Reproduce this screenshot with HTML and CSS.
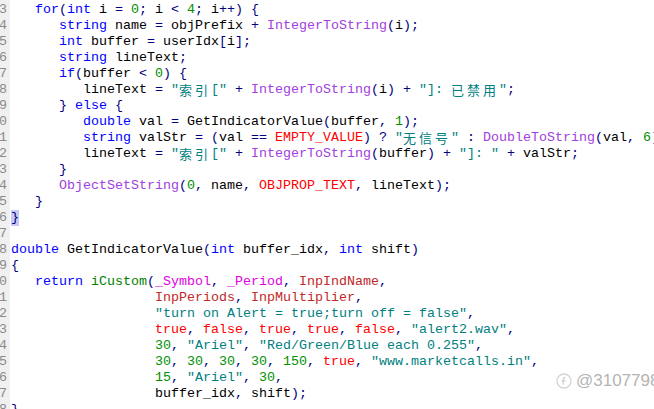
FILE: index.html
```html
<!DOCTYPE html>
<html lang="zh">
<head>
<meta charset="utf-8">
<title>MQL code</title>
<link rel="stylesheet" href="styles.css">
</head>
<body>
<div class="editor">
  <div class="row"><span class="gut">3</span><span class="code">   <span class="k">for</span><span class="o">(</span><span class="k">int</span> i <span class="o">=</span> <span class="n">0</span><span class="o">;</span> i <span class="o">&lt;</span> <span class="n">4</span><span class="o">;</span> i<span class="o">++)</span> <span class="o">{</span></span></div>
  <div class="row"><span class="gut">4</span><span class="code">      <span class="k">string</span> name <span class="o">=</span> objPrefix <span class="o">+</span> <span class="f">IntegerToString</span><span class="o">(</span>i<span class="o">);</span></span></div>
  <div class="row"><span class="gut">5</span><span class="code">      <span class="k">int</span> buffer <span class="o">=</span> userIdx<span class="o">[</span>i<span class="o">];</span></span></div>
  <div class="row"><span class="gut">6</span><span class="code">      <span class="k">string</span> lineText<span class="o">;</span></span></div>
  <div class="row"><span class="gut">7</span><span class="code">      <span class="k">if</span><span class="o">(</span>buffer <span class="o">&lt;</span> <span class="n">0</span><span class="o">)</span> <span class="o">{</span></span></div>
  <div class="row"><span class="gut">8</span><span class="code">         lineText <span class="o">=</span> <span class="s">"<span class="cj">索</span><span class="cj">引</span>["</span> <span class="o">+</span> <span class="f">IntegerToString</span><span class="o">(</span>i<span class="o">)</span> <span class="o">+</span> <span class="s">"]: <span class="cj">已</span><span class="cj">禁</span><span class="cj">用</span>"</span><span class="o">;</span></span></div>
  <div class="row"><span class="gut">9</span><span class="code">      <span class="o">}</span> <span class="k">else</span> <span class="o">{</span></span></div>
  <div class="row"><span class="gut">0</span><span class="code">         <span class="k">double</span> val <span class="o">=</span> GetIndicatorValue<span class="o">(</span>buffer<span class="o">,</span> <span class="n">1</span><span class="o">);</span></span></div>
  <div class="row"><span class="gut">1</span><span class="code">         <span class="k">string</span> valStr <span class="o">=</span> <span class="o">(</span>val <span class="o">==</span> <span class="c">EMPTY_VALUE</span><span class="o">)</span> <span class="o">?</span> <span class="s">"<span class="cj">无</span><span class="cj">信</span><span class="cj">号</span>"</span> <span class="o">:</span> <span class="f">DoubleToString</span><span class="o">(</span>val<span class="o">,</span> <span class="n">6</span><span class="o">);</span></span></div>
  <div class="row"><span class="gut">2</span><span class="code">         lineText <span class="o">=</span> <span class="s">"<span class="cj">索</span><span class="cj">引</span>["</span> <span class="o">+</span> <span class="f">IntegerToString</span><span class="o">(</span>buffer<span class="o">)</span> <span class="o">+</span> <span class="s">"]: "</span> <span class="o">+</span> valStr<span class="o">;</span></span></div>
  <div class="row"><span class="gut">3</span><span class="code">      <span class="o">}</span></span></div>
  <div class="row"><span class="gut">4</span><span class="code">      <span class="f">ObjectSetString</span><span class="o">(</span><span class="n">0</span><span class="o">,</span> name<span class="o">,</span> <span class="c">OBJPROP_TEXT</span><span class="o">,</span> lineText<span class="o">);</span></span></div>
  <div class="row"><span class="gut">5</span><span class="code">   <span class="o">}</span></span></div>
  <div class="row"><span class="gut">6</span><span class="code"><span class="o hl">}</span></span></div>
  <div class="row"><span class="gut">7</span><span class="code"></span></div>
  <div class="row"><span class="gut">8</span><span class="code"><span class="k">double</span> GetIndicatorValue<span class="o">(</span><span class="k">int</span> buffer_idx<span class="o">,</span> <span class="k">int</span> shift<span class="o">)</span></span></div>
  <div class="row"><span class="gut">9</span><span class="code"><span class="o">{</span></span></div>
  <div class="row"><span class="gut">0</span><span class="code">   <span class="k">return</span> <span class="g">iCustom</span><span class="o">(</span><span class="m">_Symbol</span><span class="o">,</span> <span class="m">_Period</span><span class="o">,</span> <span class="v">InpIndName</span><span class="o">,</span></span></div>
  <div class="row"><span class="gut">1</span><span class="code">                  <span class="v">InpPeriods</span><span class="o">,</span> <span class="v">InpMultiplier</span><span class="o">,</span></span></div>
  <div class="row"><span class="gut">2</span><span class="code">                  <span class="s">"turn on Alert = true;turn off = false"</span><span class="o">,</span></span></div>
  <div class="row"><span class="gut">3</span><span class="code">                  <span class="c">true</span><span class="o">,</span> <span class="c">false</span><span class="o">,</span> <span class="c">true</span><span class="o">,</span> <span class="c">true</span><span class="o">,</span> <span class="c">false</span><span class="o">,</span> <span class="s">"alert2.wav"</span><span class="o">,</span></span></div>
  <div class="row"><span class="gut">4</span><span class="code">                  <span class="n">30</span><span class="o">,</span> <span class="s">"Ariel"</span><span class="o">,</span> <span class="s">"Red/Green/Blue each 0.255"</span><span class="o">,</span></span></div>
  <div class="row"><span class="gut">5</span><span class="code">                  <span class="n">30</span><span class="o">,</span> <span class="n">30</span><span class="o">,</span> <span class="n">30</span><span class="o">,</span> <span class="n">30</span><span class="o">,</span> <span class="n">150</span><span class="o">,</span> <span class="c">true</span><span class="o">,</span> <span class="s">"www.marketcalls.in"</span><span class="o">,</span></span></div>
  <div class="row"><span class="gut">6</span><span class="code">                  <span class="n">15</span><span class="o">,</span> <span class="s">"Ariel"</span><span class="o">,</span> <span class="n">30</span><span class="o">,</span></span></div>
  <div class="row"><span class="gut">7</span><span class="code">                  buffer_idx<span class="o">,</span> shift<span class="o">);</span></span></div>
  <div class="row"><span class="gut">8</span><span class="code"><span class="o">}</span></span></div>
</div>
<div class="watermark">
  <svg class="wm-icon" width="16" height="16" viewBox="0 0 16 16"><circle cx="8" cy="8" r="7" fill="none" stroke="#d4d4d4" stroke-width="1.3"/><path d="M9.5 4.5 C7.8 4.5 7.2 5.3 7.2 6.8 V11.8 M5.6 8 H9.6" fill="none" stroke="#d4d4d4" stroke-width="1.3"/></svg>
  <span class="wm-text">@3107798</span>
</div>
</body>
</html>
```
FILE: styles.css
```css
html, body {
  margin: 0;
  padding: 0;
  width: 654px;
  height: 409px;
  overflow: hidden;
  background: #ffffff;
}
body {
  position: relative;
}
.editor {
  display: flex;
  flex-direction: column;
  padding-top: 2px;
  font-family: "Liberation Mono", "Noto Sans CJK SC", monospace;
  font-size: 13.33px;
  color: #000000;
  background: linear-gradient(to right, #f0f0f0 0, #f0f0f0 10px, #ffffff 10px);
  min-height: 409px;
  box-sizing: border-box;
}
.row {
  display: flex;
  height: 16px;
  line-height: 16px;
}
.gut {
  flex: none;
  width: 10px;
  box-sizing: border-box;
  text-indent: -1px;
  color: #8a8a8a;
  white-space: pre;
}
.code {
  white-space: pre;
  padding-left: 1px;
}
.k { color: #0000ff; }
.o { color: #000080; }
.n { color: #009000; }
.s { color: #008080; }
.f { color: #a040e0; }
.c { color: #ff0000; }
.v { color: #c02828; }
.m { color: #e000e0; }
.g { color: #008000; }
.cj {
  display: inline-block;
  width: 16px;
  font-family: "Noto Sans CJK SC", sans-serif;
  font-size: 13px;
  line-height: 16px;
  vertical-align: top;
}
.hl {
  background: #c8c8f4;
  display: inline-block;
  height: 16px;
}
.watermark {
  position: absolute;
  left: 556px;
  top: 371px;
  display: flex;
  align-items: center;
  gap: 4px;
  white-space: nowrap;
}
.wm-text {
  font-family: "Liberation Sans", Arial, sans-serif;
  font-size: 17px;
  color: #b4b4b4;
}
```
